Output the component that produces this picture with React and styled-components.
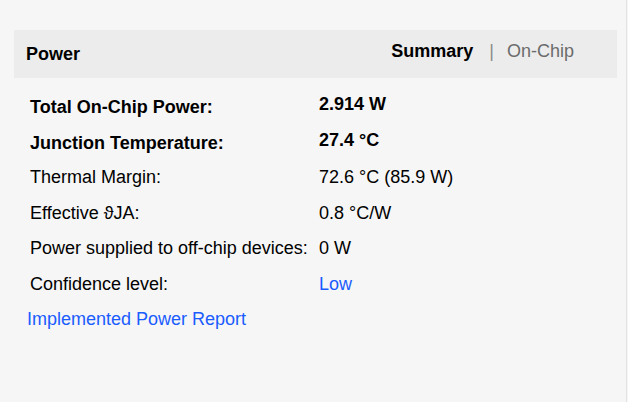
import styled, { createGlobalStyle } from "styled-components";

const GlobalStyle = createGlobalStyle`
  html, body {
    margin: 0;
    padding: 0;
    background: #f6f6f6;
  }
  body {
    font-family: "Liberation Sans", Arial, sans-serif;
    color: #000;
  }
`;

const rows = [
  { label: "Total On-Chip Power:", value: "2.914 W", strong: true },
  { label: "Junction Temperature:", value: "27.4 °C", strong: true },
  { label: "Thermal Margin:", value: "72.6 °C (85.9 W)" },
  { label: "Effective ϑJA:", value: "0.8 °C/W" },
  { label: "Power supplied to off-chip devices:", value: "0 W" },
  { label: "Confidence level:", value: "Low", link: true },
];

export default function App() {
  return (
    <>
      <GlobalStyle />
      <Page>
        <Panel>
          <Header>
            <Title>Power</Title>
            <Tabs>
              <Tab $active>Summary</Tab>
              <Divider>|</Divider>
              <Tab>On-Chip</Tab>
            </Tabs>
          </Header>
          <Table>
            {rows.map((r) => (
              <Row key={r.label}>
                <Label $strong={r.strong}>{r.label}</Label>
                <Value $strong={r.strong} $link={r.link}>
                  {r.value}
                </Value>
              </Row>
            ))}
          </Table>
          <ReportLink href="#">Implemented Power Report</ReportLink>
        </Panel>
      </Page>
    </>
  );
}

const Page = styled.div`
  width: 628px;
  height: 402px;
  box-sizing: border-box;
  padding-right: 1px;
`;

const Panel = styled.div`
  height: 100%;
  box-sizing: border-box;
  padding: 30px 9px 0 14px;
  border-right: 1px solid #e3e3e3;
`;

const Header = styled.div`
  display: flex;
  align-items: center;
  justify-content: space-between;
  height: 48px;
  padding: 0 43px 0 12px;
  background: #ececec;
  font-size: 18px;
`;

const Title = styled.div`
  font-weight: bold;
  padding-top: 1px;
`;

const Tabs = styled.div`
  display: flex;
  align-items: center;
  padding-bottom: 6px;
`;

const Tab = styled.span`
  font-weight: ${(p) => (p.$active ? "bold" : "normal")};
  color: ${(p) => (p.$active ? "#000" : "#6b6b6b")};
  cursor: pointer;
`;

const Divider = styled.span`
  color: #8a8a8a;
  margin: 0 13px 0 16px;
`;

const Table = styled.div`
  display: flex;
  flex-direction: column;
  margin-top: 11px;
  padding-left: 16px;
`;

const Row = styled.div`
  display: grid;
  grid-template-columns: 289px 1fr;
  height: 35.5px;
  line-height: 35.5px;
  font-size: 18px;
`;

const Label = styled.div`
  font-weight: ${(p) => (p.$strong ? "bold" : "normal")};
  margin-top: ${(p) => (p.$strong ? "1px" : "0")};
  white-space: nowrap;
`;

const Value = styled.div`
  font-weight: ${(p) => (p.$strong ? "bold" : "normal")};
  color: ${(p) => (p.$link ? "#1a5cff" : "#000")};
  margin-top: ${(p) => (p.$strong ? "-2px" : "0")};
`;

const ReportLink = styled.a`
  display: block;
  margin-left: 13px;
  line-height: 34px;
  font-size: 18px;
  color: #1a5cff;
  text-decoration: none;
`;
